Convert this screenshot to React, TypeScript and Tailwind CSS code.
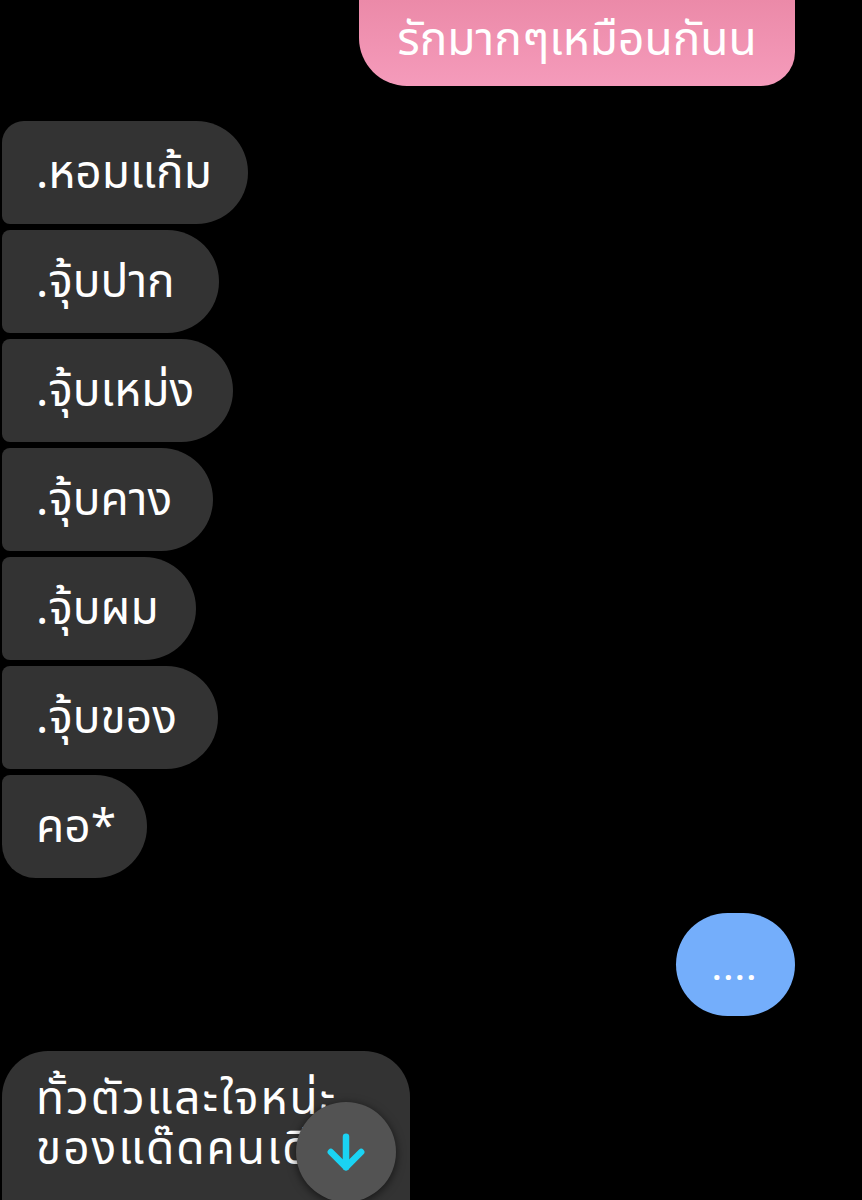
import { ArrowDown } from "lucide-react";

const thai = {
  fontFamily: '"Noto Sans Thai", "Noto Sans", "DejaVu Sans", sans-serif',
};

const items = [
  { t: ".หอมแก้ม", w: "w-[246px]" },
  { t: ".จุ้บปาก", w: "w-[217px]" },
  { t: ".จุ้บเหม่ง", w: "w-[231px]" },
  { t: ".จุ้บคาง", w: "w-[211px]" },
  { t: ".จุ้บผม", w: "w-[194px]" },
  { t: ".จุ้บของ", w: "w-[216px]" },
  { t: "คอ*", w: "w-[145px]" },
];

export default function App() {
  return (
    <div className="w-[862px] h-[1200px] overflow-hidden bg-black relative" style={thai}>
      <div className="flex flex-col">
        {/* outgoing pink */}
        <div className="flex justify-end pr-[67px] -mt-[20px]">
          <div className="h-[106px] w-[436px] rounded-t-[20px] rounded-bl-[48px] rounded-br-[34px] bg-gradient-to-b from-[#e986a4] to-[#f59bbb] text-white text-[46px] flex items-center justify-center pt-[16px]">
            รักมากๆเหมือนกันน
          </div>
        </div>

        {/* incoming run */}
        <div className="flex flex-col gap-[6px] mt-[35px] pl-[2px]">
          {items.map((it, i) => (
            <div key={i} className="flex">
              <div
                className={`${it.w} h-[103px] flex items-center pl-[34px] pt-[4px] bg-[#333333] text-white text-[46px] whitespace-nowrap rounded-r-[52px] ${
                  i === 0 ? "rounded-tl-[22px] rounded-bl-[8px]" : i === items.length - 1 ? "rounded-tl-[8px] rounded-bl-[34px]" : "rounded-l-[8px]"
                }`}
              >
                {it.t}
              </div>
            </div>
          ))}
        </div>

        {/* outgoing blue */}
        <div className="flex justify-end pr-[67px] mt-[35px]">
          <div className="h-[103px] w-[119px] rounded-full bg-[#74aefb] text-white text-[30px] font-bold flex items-end justify-center pb-[30px] tracking-[3px] leading-none">
            ....
          </div>
        </div>

        {/* incoming long */}
        <div className="flex mt-[35px] pl-[2px]">
          <div className="w-[408px] h-[180px] rounded-tl-[46px] rounded-tr-[46px] bg-[#333333] text-white text-[46px] leading-[50px] tracking-[2px] pl-[34px] pt-[24px] whitespace-nowrap overflow-hidden">
            <p>
              ทั้วตัวและใจหน่ะ
              <br />
              ของแด๊ดคนเดียว
            </p>
          </div>
        </div>
      </div>

      {/* scroll to bottom */}
      <div className="absolute left-[296px] top-[1102px] w-[100px] h-[100px] rounded-full bg-[#535353] shadow-[0_2px_10px_rgba(0,0,0,0.6)] flex items-center justify-center">
        <ArrowDown className="w-[52px] h-[52px] text-[#1ad3f3]" strokeWidth={3} />
      </div>
    </div>
  );
}
